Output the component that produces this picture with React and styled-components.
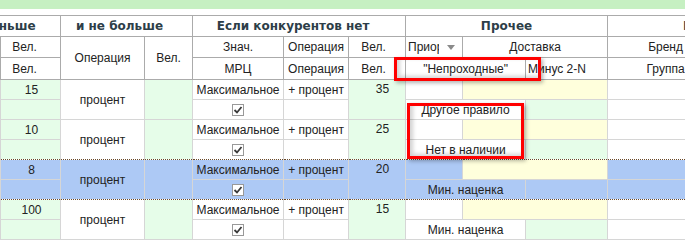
import React from "react";
import styled, { createGlobalStyle } from "styled-components";

const GlobalStyle = createGlobalStyle`
  body {
    margin: 0;
    background: #ffffff;
    font-family: "Liberation Sans", Arial, sans-serif;
  }
`;

const BG = {
  white: "#ffffff",
  green: "#e6fde9",
  yellow: "#ffffdc",
  blue: "#adc9f5",
};

const COLS = [61, 60, 84, 48, 91, 65, 57, 57, 63, 82, 116, 136];

const records = [
  { min: 15, max: 35, note: "Другое правило" },
  { min: 10, max: 25, note: "Нет в наличии" },
  { min: 8, max: 20, note: "Мин. наценка", selected: true },
  { min: 100, max: 15, note: "Мин. наценка" },
];

const TopBand = styled.div`
  height: 9px;
  background: #c6f0c2;
`;

const Viewport = styled.div`
  position: relative;
  width: 685px;
  margin-top: 6px;
  overflow: hidden;
`;

const Grid = styled.table`
  margin-left: -61px;
  border-collapse: collapse;
  table-layout: fixed;
  width: ${COLS.reduce((a, b) => a + b, 0)}px;
  font-size: 12px;
  color: #222;
`;

const HeadRow = styled.tr`
  height: ${(p) => p.$h}px;
`;

const HeadCell = styled.th`
  border: 1px solid #ababab;
  background: #fff;
  padding: 0 2px ${(p) => (p.$group ? 1 : 0)}px;
  padding-right: ${(p) => p.$pr || 2}px;
  font-family: ${(p) => (p.$group ? '"DejaVu Sans", Verdana, sans-serif' : "inherit")};
  font-size: 12px;
  font-weight: ${(p) => (p.$group ? 700 : 400)};
  color: ${(p) => (p.$group ? "#2d3e48" : "#222")};
  text-align: ${(p) => p.$align || "center"};
  white-space: nowrap;
  overflow: hidden;
`;

const SortHead = styled.div`
  display: flex;
  align-items: center;
`;

const SortLabel = styled.span`
  width: 31px;
  overflow: hidden;
`;

const SortArrow = styled.span`
  margin-left: auto;
  margin-right: 5px;
  border-top: 5px solid #8a8a8a;
  border-left: 4px solid transparent;
  border-right: 4px solid transparent;
`;

const DataRow = styled.tr`
  height: 20px;
`;

const line = (dotted) => (dotted ? "1px dotted #6b4a2a" : "1px solid #d6d6d6");

const Cell = styled.td`
  background: ${(p) => BG[p.$bg || "white"]};
  border-left: 1px solid #d6d6d6;
  border-right: 1px solid #d6d6d6;
  border-top: ${(p) => line(p.$dotTop)};
  border-bottom: ${(p) => line(p.$dotBottom)};
  padding: 0 ${(p) => p.$pr || 3}px 0 3px;
  text-align: ${(p) => p.$align || "center"};
  vertical-align: ${(p) => (p.$top ? "top" : "middle")};
  line-height: ${(p) => (p.$top ? "19px" : "normal")};
  white-space: nowrap;
  overflow: hidden;
`;

const Check = styled.svg`
  display: block;
  margin: 0 auto;
`;

const Callout = styled.div`
  position: absolute;
  left: ${(p) => p.$x}px;
  top: ${(p) => p.$y}px;
  width: ${(p) => p.$w}px;
  height: ${(p) => p.$h}px;
  box-sizing: border-box;
  border: 3px solid #ff0000;
  box-shadow: 2px 2px 4px rgba(0, 0, 0, 0.3), inset 3px -2px 4px rgba(0, 0, 0, 0.18);
  pointer-events: none;
`;

const Checkbox = () => (
  <Check width="12" height="12" viewBox="0 0 12 12">
    <rect x="0.5" y="0.5" width="11" height="11" fill="#fff" stroke="#999" />
    <path d="M2.5 6 L5 8.5 L9.5 3" fill="none" stroke="#3a3a3a" strokeWidth="1.8" />
  </Check>
);

const Record = ({ rec, prevSelected, nextSelected }) => {
  const sel = rec.selected;
  const bg = (b) => (sel ? "blue" : b);
  const dotTop = sel || prevSelected;
  const dotBottom = sel || nextSelected;
  const a = { $dotTop: dotTop };
  const span = { $dotTop: dotTop, $dotBottom: dotBottom };
  const b = { $dotBottom: dotBottom };

  return (
    <>
      <DataRow>
        <Cell rowSpan={2} $bg={bg("white")} {...span} />
        <Cell $bg={bg("green")} $pr={1} {...a}>{rec.min}</Cell>
        <Cell rowSpan={2} $bg={bg("white")} {...span}>процент</Cell>
        <Cell rowSpan={2} $bg={bg("green")} {...span} />
        <Cell $bg={bg("white")} {...a}>Максимальное</Cell>
        <Cell $bg={bg("white")} {...a}>+ процент</Cell>
        <Cell rowSpan={2} $bg={bg("green")} $align="right" $pr={16} $top {...span}>
          {rec.max}
        </Cell>
        <Cell $bg={bg("white")} {...a} />
        <Cell colSpan={2} $bg="yellow" {...a} />
        <Cell $bg={bg("white")} {...a} />
        <Cell $bg={bg("white")} {...a} />
      </DataRow>
      <DataRow>
        <Cell $bg={bg("green")} {...b} />
        <Cell $bg={bg("white")} {...b}>
          <Checkbox />
        </Cell>
        <Cell $bg={bg("white")} {...b} />
        <Cell colSpan={2} $bg={bg("white")} {...b}>{rec.note}</Cell>
        <Cell $bg={bg("green")} {...b} />
        <Cell $bg={bg("white")} {...b} />
        <Cell $bg={bg("white")} {...b} />
      </DataRow>
    </>
  );
};

export default function App() {
  return (
    <>
      <GlobalStyle />
      <TopBand />
      <Viewport>
        <Grid>
          <colgroup>
            {COLS.map((w, i) => (
              <col key={i} style={{ width: w }} />
            ))}
          </colgroup>
          <thead>
            <HeadRow $h={21}>
              <HeadCell colSpan={2} $group $pr={8}>Не меньше</HeadCell>
              <HeadCell colSpan={2} $group $pr={16}>и не больше</HeadCell>
              <HeadCell colSpan={3} $group $pr={14}>Если конкурентов нет</HeadCell>
              <HeadCell colSpan={3} $group>Прочее</HeadCell>
              <HeadCell colSpan={2} $group>Номенклатура</HeadCell>
            </HeadRow>
            <HeadRow $h={21}>
              <HeadCell rowSpan={2}>Операция</HeadCell>
              <HeadCell $pr={14}>Вел.</HeadCell>
              <HeadCell rowSpan={2}>Операция</HeadCell>
              <HeadCell rowSpan={2}>Вел.</HeadCell>
              <HeadCell>Знач.</HeadCell>
              <HeadCell>Операция</HeadCell>
              <HeadCell $pr={9}>Вел.</HeadCell>
              <HeadCell $align="left">
                <SortHead>
                  <SortLabel>Приоритет</SortLabel>
                  <SortArrow />
                </SortHead>
              </HeadCell>
              <HeadCell colSpan={2}>Доставка</HeadCell>
              <HeadCell>Бренд</HeadCell>
              <HeadCell />
            </HeadRow>
            <HeadRow $h={22}>
              <HeadCell $pr={14}>Вел.</HeadCell>
              <HeadCell>МРЦ</HeadCell>
              <HeadCell>Операция</HeadCell>
              <HeadCell $pr={9}>Вел.</HeadCell>
              <HeadCell colSpan={2}>"Непроходные"</HeadCell>
              <HeadCell $align="left">Минус 2-N</HeadCell>
              <HeadCell>Группа</HeadCell>
              <HeadCell />
            </HeadRow>
          </thead>
          <tbody>
            {records.map((rec, i) => (
              <Record
                key={i}
                rec={rec}
                prevSelected={!!records[i - 1]?.selected}
                nextSelected={!!records[i + 1]?.selected}
              />
            ))}
          </tbody>
        </Grid>
        <Callout $x={394} $y={42} $w={147} $h={24} />
        <Callout $x={407} $y={88} $w={117} $h={56} />
      </Viewport>
    </>
  );
}
